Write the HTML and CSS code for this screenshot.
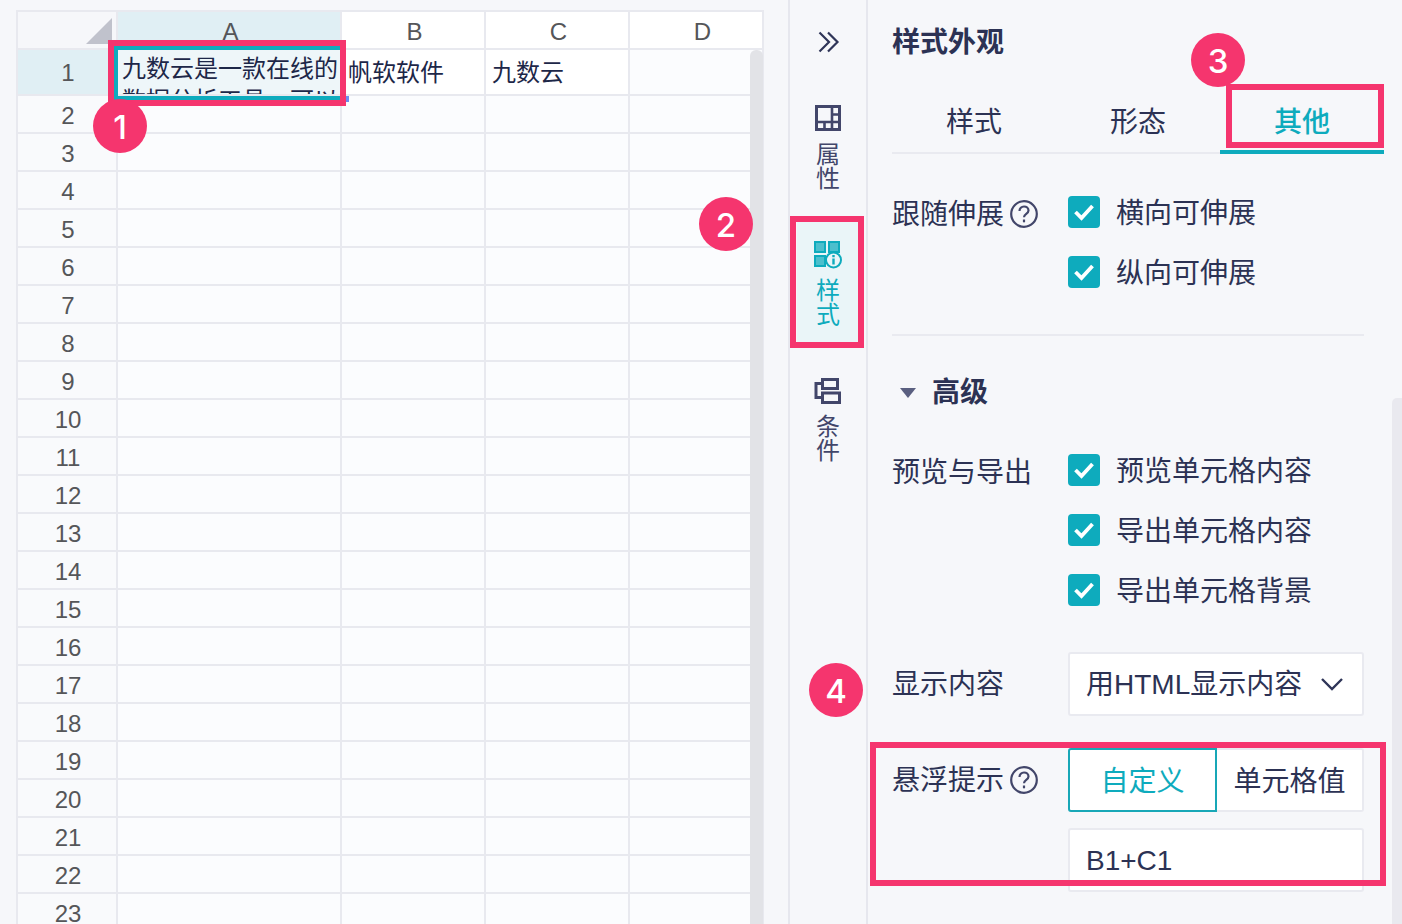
FILE: index.html
```html
<!DOCTYPE html>
<html lang="zh-CN">
<head>
<meta charset="utf-8">
<title>样式外观</title>
<link rel="stylesheet" href="styles.css">
</head>
<body>
<div class="page">
  <main class="sheet-area">
    <div class="sheet">
      <div class="corner"><svg class="corner-tri" width="26" height="26" viewBox="0 0 26 26"><polygon points="26,0 26,26 0,26" fill="#c0c2cc"/></svg></div>
      <div class="col sel">A</div><div class="col">B</div><div class="col">C</div><div class="col">D</div>
      <div class="hd sel tall">1</div>
      <div class="c tall a1">九数云是一款在线的数据分析工具，可以</div>
      <div class="c tall txt">帆软软件</div>
      <div class="c tall txt">九数云</div>
      <div class="c tall"></div>
      <div class="hd">2</div><div class="c"></div><div class="c"></div><div class="c"></div><div class="c"></div>
      <div class="hd">3</div><div class="c"></div><div class="c"></div><div class="c"></div><div class="c"></div>
      <div class="hd">4</div><div class="c"></div><div class="c"></div><div class="c"></div><div class="c"></div>
      <div class="hd">5</div><div class="c"></div><div class="c"></div><div class="c"></div><div class="c"></div>
      <div class="hd">6</div><div class="c"></div><div class="c"></div><div class="c"></div><div class="c"></div>
      <div class="hd">7</div><div class="c"></div><div class="c"></div><div class="c"></div><div class="c"></div>
      <div class="hd">8</div><div class="c"></div><div class="c"></div><div class="c"></div><div class="c"></div>
      <div class="hd">9</div><div class="c"></div><div class="c"></div><div class="c"></div><div class="c"></div>
      <div class="hd">10</div><div class="c"></div><div class="c"></div><div class="c"></div><div class="c"></div>
      <div class="hd">11</div><div class="c"></div><div class="c"></div><div class="c"></div><div class="c"></div>
      <div class="hd">12</div><div class="c"></div><div class="c"></div><div class="c"></div><div class="c"></div>
      <div class="hd">13</div><div class="c"></div><div class="c"></div><div class="c"></div><div class="c"></div>
      <div class="hd">14</div><div class="c"></div><div class="c"></div><div class="c"></div><div class="c"></div>
      <div class="hd">15</div><div class="c"></div><div class="c"></div><div class="c"></div><div class="c"></div>
      <div class="hd">16</div><div class="c"></div><div class="c"></div><div class="c"></div><div class="c"></div>
      <div class="hd">17</div><div class="c"></div><div class="c"></div><div class="c"></div><div class="c"></div>
      <div class="hd">18</div><div class="c"></div><div class="c"></div><div class="c"></div><div class="c"></div>
      <div class="hd">19</div><div class="c"></div><div class="c"></div><div class="c"></div><div class="c"></div>
      <div class="hd">20</div><div class="c"></div><div class="c"></div><div class="c"></div><div class="c"></div>
      <div class="hd">21</div><div class="c"></div><div class="c"></div><div class="c"></div><div class="c"></div>
      <div class="hd">22</div><div class="c"></div><div class="c"></div><div class="c"></div><div class="c"></div>
      <div class="hd">23</div><div class="c"></div><div class="c"></div><div class="c"></div><div class="c"></div>
    </div>
  </main>

  <nav class="rail">
    <svg class="chevrons" width="22" height="22" viewBox="0 0 22 22" fill="none" stroke="#2f3558" stroke-width="2.200"><path d="M1.500 1.500l9.500 9.500-9.500 9.500M10 1.500l9.500 9.500-9.500 9.500"/></svg>
    <div class="rail-item attr">
      <svg width="26" height="26" viewBox="0 0 26 26" fill="none" stroke="#42466a" stroke-width="3"><rect x="1.500" y="1.500" width="23" height="23"/><path d="M1.500 17h23M17 1.500v23M17 9.500h7.500M9.500 17v7.500" stroke-width="2.600"/></svg>
      <span class="rail-label">属<br>性</span>
    </div>
    <div class="rail-item active">
      <svg width="28" height="28" viewBox="0 0 28 28"><g fill="none" stroke="#0eabbd" stroke-width="2"><rect x="1" y="1" width="10" height="10" fill="#4cbfcd"/><rect x="15" y="1" width="10" height="10" fill="#4cbfcd"/><rect x="1" y="15" width="10" height="10" fill="#4cbfcd"/><circle cx="19.500" cy="19" r="7.500" fill="#eaf5f8"/></g><path d="M18.300 17.500h2.400v6h-2.400zM18.300 14h2.400v2.200h-2.400z" fill="#0eabbd"/></svg>
      <span class="rail-label">样<br>式</span>
    </div>
    <div class="rail-item cond">
      <svg width="28" height="26" viewBox="0 0 28 26" fill="none" stroke="#42466a" stroke-width="3"><rect x="8.500" y="1.500" width="15" height="9"/><rect x="8.500" y="15" width="17" height="9.500"/><path d="M8.500 5.500H2v14h6.500"/></svg>
      <span class="rail-label">条<br>件</span>
    </div>
  </nav>

  <aside class="panel">
    <h1 class="title">样式外观</h1>
    <div class="tabs">
      <div class="tab">样式</div><div class="tab">形态</div><div class="tab on">其他</div>
    </div>

    <div class="row first">
      <div class="label">跟随伸展<svg class="help" width="28" height="28" viewBox="0 0 28 28" fill="none" stroke="#42466a" stroke-width="2.200"><circle cx="14" cy="14" r="12.800"/><path d="M9.500 11c0-2.800 2-4.500 4.500-4.500s4.500 1.700 4.500 4c0 3.300-4.500 3.300-4.500 6.700"/><path d="M14 19.500v2.800"/></svg></div>
      <div class="checks">
        <div class="check"><span class="box"><svg width="22" height="18" viewBox="0 0 22 18" fill="none" stroke="#fff" stroke-width="3.800"><path d="M2.500 9l6 6 11-12"/></svg></span>横向可伸展</div>
        <div class="check"><span class="box"><svg width="22" height="18" viewBox="0 0 22 18" fill="none" stroke="#fff" stroke-width="3.800"><path d="M2.500 9l6 6 11-12"/></svg></span>纵向可伸展</div>
      </div>
    </div>

    <hr class="rule">

    <div class="adv"><span class="tri"></span>高级</div>

    <div class="row preview">
      <div class="label">预览与导出</div>
      <div class="checks">
        <div class="check"><span class="box"><svg width="22" height="18" viewBox="0 0 22 18" fill="none" stroke="#fff" stroke-width="3.800"><path d="M2.500 9l6 6 11-12"/></svg></span>预览单元格内容</div>
        <div class="check"><span class="box"><svg width="22" height="18" viewBox="0 0 22 18" fill="none" stroke="#fff" stroke-width="3.800"><path d="M2.500 9l6 6 11-12"/></svg></span>导出单元格内容</div>
        <div class="check"><span class="box"><svg width="22" height="18" viewBox="0 0 22 18" fill="none" stroke="#fff" stroke-width="3.800"><path d="M2.500 9l6 6 11-12"/></svg></span>导出单元格背景</div>
      </div>
    </div>

    <div class="row field show">
      <div class="label">显示内容</div>
      <div class="control select"><span class="sel-text">用HTML显示内容</span><svg width="24" height="14" viewBox="0 0 24 14" fill="none" stroke="#2f3558" stroke-width="2.400"><path d="M2 2l10 10L22 2"/></svg></div>
    </div>

    <div class="row field tip">
      <div class="label">悬浮提示<svg class="help" width="28" height="28" viewBox="0 0 28 28" fill="none" stroke="#42466a" stroke-width="2.200"><circle cx="14" cy="14" r="12.800"/><path d="M9.500 11c0-2.800 2-4.500 4.500-4.500s4.500 1.700 4.500 4c0 3.300-4.500 3.300-4.500 6.700"/><path d="M14 19.500v2.800"/></svg></div>
      <div class="stack">
        <div class="segment"><div class="seg on">自定义</div><div class="seg">单元格值</div></div>
        <div class="control input">B1+C1</div>
      </div>
    </div>
    <div class="panel-scroll"></div>
  </aside>

  <div class="sheet-scroll"></div>
  <div class="cell-border"></div>
  <div class="cell-dot"></div>
  <div class="mark m1"></div>
  <div class="mark m2"></div>
  <div class="mark m3"></div>
  <div class="mark m4"></div>
  <div class="badge b1">1</div>
  <div class="badge b2">2</div>
  <div class="badge b3">3</div>
  <div class="badge b4">4</div>
</div>
</body>
</html>
```

FILE: styles.css
```css
* { box-sizing: border-box; }
html, body { margin: 0; height: 100%; }
body {
  background: #f6f7fa;
  color: #2c3254;
  font-family: "Liberation Sans", "Noto Sans CJK SC", sans-serif;
  overflow: hidden;
}
.page {
  position: relative;
  display: flex;
  width: 1402px;
  height: 924px;
  overflow: hidden;
}

/* sheet */
.sheet-area { width: 788px; flex: none; padding: 10px 0 0 16px; }
.sheet {
  display: grid;
  grid-template-columns: 100px 224px 144px 144px 144px;
  grid-template-rows: 38px 46px;
  grid-auto-rows: 38px;
  width: 748px;
  overflow: hidden;
  border-left: 2px solid #e8e9ef;
  border-top: 2px solid #e8e9ef;
  border-right: 2px solid #e8e9ef;
  background: #fbfcfe;
}
.corner, .col, .hd, .c { border-right: 2px solid #e8e9ef; border-bottom: 2px solid #e8e9ef; }
.corner { display: flex; align-items: flex-end; justify-content: flex-end; padding: 0 4px 4px 0; background: #f6f7fa; }
.corner-tri { display: block; }
.col, .hd {
  display: flex;
  align-items: center;
  justify-content: center;
  font-size: 24px;
  color: #555659;
}
.col { background: #fff; padding: 3px 0 0 3px; }
.hd { background: #f9fafc; padding: 4px 0 0 2px; }
.hd.tall { padding-top: 2px; }
.col.sel, .hd.sel { background: #e0eff4; }
.c { background: #fbfcfe; overflow: hidden; font-size: 24px; color: #1d2748; }
.txt { display: flex; align-items: center; padding: 0 0 4px 6px; background: #fff; }
.a1 { padding: 3px 0 0 4px; line-height: 32px; background: #eef6f9; }

/* rail */
.rail {
  width: 80px;
  flex: none;
  display: flex;
  flex-direction: column;
  align-items: center;
  border-left: 2px solid #e6e7ee;
  border-right: 2px solid #e6e7ee;
}
.chevrons { flex: none; margin-top: 31px; margin-left: 1px; }
.rail-item {
  width: 62px;
  display: flex;
  flex-direction: column;
  align-items: center;
  color: #42466a;
}
.rail-item svg { flex: none; display: block; }
.rail-label { font-size: 24px; line-height: 24px; margin-top: 11px; }
.rail-item.attr { margin-top: 52px; height: 117px; }
.rail-item.attr .rail-label { margin-top: 12px; }
.rail-item.active {
  height: 120px;
  padding-top: 19px;
  background: #eaf5f8;
  color: #0eabbd;
}
.rail-item.active .rail-label { margin-top: 10px; }
.rail-item.cond { margin-top: 36px; }

/* panel */
.panel {
  position: relative;
  flex: 1;
  padding: 0 38px 0 24px;
  min-width: 0;
}
.title {
  margin: 23px 0 0;
  font-size: 28px;
  line-height: 40px;
  font-weight: 700;
  color: #2c3254;
}
.tabs {
  display: flex;
  width: 492px;
  height: 91px;
  border-bottom: 2px solid #e9eaf0;
}
.tab {
  width: 164px;
  height: 91px;
  padding-top: 40px;
  text-align: center;
  font-size: 28px;
  line-height: 40px;
}
.tab.on {
  color: #0eabbd;
  font-weight: 500;
  border-bottom: 4px solid #0eabbd;
}
.row { display: flex; }
.label {
  width: 176px;
  flex: none;
  display: flex;
  align-items: center;
  gap: 6px;
  height: 40px;
  padding-top: 2px;
  font-size: 28px;
  line-height: 40px;
  white-space: nowrap;
}
.help { flex: none; margin-top: -2px; }
.row.first { margin-top: 40px; }
.checks { display: flex; flex-direction: column; gap: 20px; }
.check {
  display: flex;
  align-items: center;
  gap: 16px;
  height: 40px;
  font-size: 28px;
  line-height: 40px;
}
.box {
  width: 32px;
  height: 32px;
  margin-bottom: 4px;
  border-radius: 4px;
  background: #0eabbd;
  display: flex;
  align-items: center;
  justify-content: center;
}
.rule { height: 2px; border: 0; background: #e9eaf0; margin: 40px 0 0; }
.adv {
  display: flex;
  align-items: center;
  margin-top: 37px;
  height: 40px;
  font-size: 28px;
  line-height: 40px;
  font-weight: 700;
}
.tri {
  width: 0;
  height: 0;
  margin: 0 16px 0 8px;
  border-left: 8px solid transparent;
  border-right: 8px solid transparent;
  border-top: 10px solid #5a5f80;
}
.row.preview { margin-top: 39px; }
.row.field .label { height: 64px; }
.row.show { margin-top: 40px; }
.row.tip { margin-top: 32px; }
.control {
  background: #fff;
  border: 2px solid #e9eaf0;
  border-radius: 3px;
  width: 296px;
  height: 64px;
  font-size: 28px;
  display: flex;
  align-items: center;
  padding: 0 18px 0 16px;
}
.select { justify-content: space-between; }
.sel-text { margin-top: -4px; }
.input { padding-top: 2px; }
.stack { display: flex; flex-direction: column; gap: 16px; }
.segment { display: flex; width: 296px; height: 64px; }
.seg {
  background: #fff;
  border: 2px solid #e9eaf0;
  border-left: 0;
  border-radius: 0 3px 3px 0;
  flex: 1;
  display: flex;
  align-items: center;
  justify-content: center;
  padding-bottom: 2px;
  font-size: 28px;
}
.seg.on {
  flex: none;
  width: 149px;
  border: 2px solid #18a7b7;
  border-radius: 3px 0 0 3px;
  color: #0eabbd;
}
.panel-scroll {
  position: absolute;
  right: 0;
  top: 398px;
  bottom: 0;
  width: 10px;
  background: #e9e9ef;
  border-radius: 5px 0 0 0;
}

/* overlays */
.sheet-scroll {
  position: absolute;
  left: 750px;
  top: 50px;
  bottom: 0;
  width: 13px;
  background: #e2e3e7;
  border-radius: 6px 6px 0 0;
}
.cell-border {
  position: absolute;
  left: 114px;
  top: 46px;
  width: 232px;
  height: 54px;
  border: 4px solid #0eabbd;
}
.cell-dot {
  position: absolute;
  left: 346px;
  top: 96px;
  width: 3px;
  height: 6px;
  background: #6c8cf0;
}
.mark { position: absolute; border: 6px solid #f5356e; }
.m1 { left: 108px; top: 40px; width: 238px; height: 66px; }
.m2 { left: 790px; top: 216px; width: 74px; height: 132px; }
.m3 { left: 1226px; top: 84px; width: 158px; height: 64px; }
.m4 { left: 870px; top: 742px; width: 516px; height: 144px; }
.badge {
  position: absolute;
  width: 54px;
  height: 54px;
  padding-top: 2px;
  border-radius: 50%;
  background: #f5356e;
  color: #fff;
  font-family: Inter, "Liberation Sans", sans-serif;
  font-size: 33px;
  font-weight: 500;
  display: flex;
  align-items: center;
  justify-content: center;
}
.b1 { left: 93px; top: 99px; }
.b2 { left: 699px; top: 197px; }
.b3 { left: 1191px; top: 33px; }
.b4 { left: 809px; top: 663px; }
```
